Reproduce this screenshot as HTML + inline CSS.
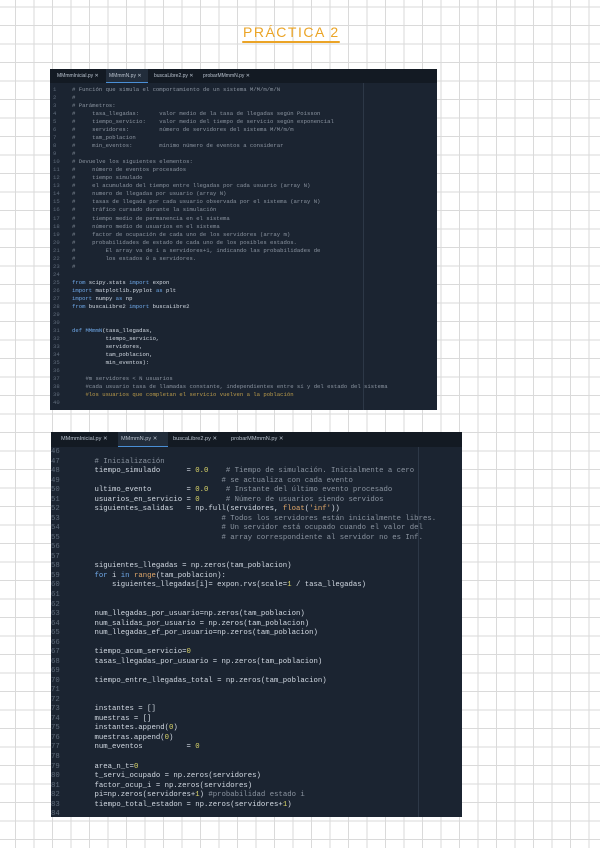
<!DOCTYPE html>
<html><head><meta charset="utf-8"><style>
*{margin:0;padding:0;box-sizing:border-box}
body{width:600px;height:848px;overflow:hidden;position:relative;background-color:#fff;
background-image:linear-gradient(to right,#dadada 1px,transparent 1px),linear-gradient(to bottom,#dadada 1px,transparent 1px);
background-size:18.5px 18.5px;background-position:15px 6.5px;font-family:"Liberation Mono",monospace}
.title{position:absolute;left:243px;top:24px;font-family:"Liberation Sans",sans-serif;font-size:14px;letter-spacing:1.5px;color:#eba426;font-weight:normal}
.uline{position:absolute;left:242px;top:41px;width:98px;height:2px;background:#eba426;border-radius:1px}
.panel{position:absolute;background:#1b2431;overflow:hidden}
.tabs{position:absolute;left:0;top:0;right:0;background:#131a23;font-family:"Liberation Sans",sans-serif;color:#b7c0cc}
.tab{position:absolute;top:0;white-space:nowrap}
.tab.act{background:#222d3b;border-bottom:1px solid #4a8fd6}
.ruler{position:absolute;top:0;bottom:0;width:1px;background:#2d3847}
pre{position:absolute;font-family:"Liberation Mono",monospace;color:#d3dae3;white-space:pre}
.ln{color:#5f6b7a}
.c{color:#8b94a0}
.k{color:#6fa8e8}
.n{color:#dcd66a}
.f{color:#e0a76a}
.y{color:#b99a4a}
</style></head><body>
<div class="title">PRÁCTICA 2</div><div class="uline"></div>

<div class="panel" style="left:50px;top:69px;width:387px;height:341px">
 <div class="tabs" style="height:14px;font-size:5px;line-height:14px">
  <div class="tab" style="left:4px;width:49px;padding-left:3px">MMmmInicial.py ✕</div>
  <div class="tab act" style="left:56px;width:42px;padding-left:3px;height:14px">MMmmN.py ✕</div>
  <div class="tab" style="left:101px;width:47px;padding-left:3px">buscaLibre2.py ✕</div>
  <div class="tab" style="left:150px;width:60px;padding-left:3px">probarMMmmN.py ✕</div>
 </div>
 <div class="ruler" style="left:313px;top:14px"></div>
 <pre class="ln" style="left:3px;top:17px;font-size:5.6px;line-height:8.03px">1
2
3
4
5
6
7
8
9
10
11
12
13
14
15
16
17
18
19
20
21
22
23
24
25
26
27
28
29
30
31
32
33
34
35
36
37
38
39
40</pre>
 <pre style="left:22px;top:17px;font-size:5.6px;line-height:8.03px"><span class="c"># Función que simula el comportamiento de un sistema M/M/m/m/N
#
# Parámetros:
#     tasa_llegadas:      valor medio de la tasa de llegadas según Poisson
#     tiempo_servicio:    valor medio del tiempo de servicio según exponencial
#     servidores:         número de servidores del sistema M/M/m/m
#     tam_poblacion
#     min_eventos:        mínimo número de eventos a considerar
#
# Devuelve los siguientes elementos:
#     número de eventos procesados
#     tiempo simulado
#     el acumulado del tiempo entre llegadas por cada usuario (array N)
#     numero de llegadas por usuario (array N)
#     tasas de llegada por cada usuario observada por el sistema (array N)
#     tráfico cursado durante la simulación
#     tiempo medio de permanencia en el sistema
#     número medio de usuarios en el sistema
#     factor de ocupación de cada uno de los servidores (array m)
#     probabilidades de estado de cada uno de los posibles estados.
#         El array va de 1 a servidores+1, indicando las probabilidades de
#         los estados 0 a servidores.
#</span>

<span class="k">from</span> scipy.stats <span class="k">import</span> expon
<span class="k">import</span> matplotlib.pyplot <span class="k">as</span> plt
<span class="k">import</span> numpy <span class="k">as</span> np
<span class="k">from</span> buscaLibre2 <span class="k">import</span> buscaLibre2


<span class="k">def</span> <span class="k">MMmmN</span>(tasa_llegadas,
          tiempo_servicio,
          servidores,
          tam_poblacion,
          min_eventos):

    <span class="c">#m servidores &lt; N usuarios</span>
    <span class="c">#cada usuario tasa de llamadas constante, independientes entre sí y del estado del sistema</span>
    <span class="y">#los usuarios que completan el servicio vuelven a la población</span>
</pre>
</div>

<div class="panel" style="left:51px;top:432px;width:411px;height:385px">
 <div class="tabs" style="height:15px;font-size:5.6px;line-height:15px">
  <div class="tab" style="left:7px;width:58px;padding-left:3px">MMmmInicial.py ✕</div>
  <div class="tab act" style="left:67px;width:50px;padding-left:3px;height:15px">MMmmN.py ✕</div>
  <div class="tab" style="left:119px;width:56px;padding-left:3px">buscaLibre2.py ✕</div>
  <div class="tab" style="left:177px;width:66px;padding-left:3px">probarMMmmN.py ✕</div>
 </div>
 <div class="ruler" style="left:367px;top:15px"></div>
 <pre class="ln" style="left:0px;top:16px;font-size:7.3px;line-height:9.53px">46
47
48
49
50
51
52
53
54
55
56
57
58
59
60
61
62
63
64
65
66
67
68
69
70
71
72
73
74
75
76
77
78
79
80
81
82
83
84</pre>
 <pre style="left:26px;top:16px;font-size:7.3px;line-height:9.53px">

    <span class="c"># Inicialización</span>
    tiempo_simulado      = <span class="n">0.0</span>    <span class="c"># Tiempo de simulación. Inicialmente a cero</span>
                                 <span class="c"># se actualiza con cada evento</span>
    ultimo_evento        = <span class="n">0.0</span>    <span class="c"># Instante del último evento procesado</span>
    usuarios_en_servicio = <span class="n">0</span>      <span class="c"># Número de usuarios siendo servidos</span>
    siguientes_salidas   = np.full(servidores, <span class="f">float</span>(<span class="f">'inf'</span>))
                                 <span class="c"># Todos los servidores están inicialmente libres.</span>
                                 <span class="c"># Un servidor está ocupado cuando el valor del</span>
                                 <span class="c"># array correspondiente al servidor no es Inf.</span>


    siguientes_llegadas = np.zeros(tam_poblacion)
    <span class="k">for</span> i <span class="k">in</span> <span class="f">range</span>(tam_poblacion):
        siguientes_llegadas[i]= expon.rvs(scale=<span class="n">1</span> / tasa_llegadas)


    num_llegadas_por_usuario=np.zeros(tam_poblacion)
    num_salidas_por_usuario = np.zeros(tam_poblacion)
    num_llegadas_ef_por_usuario=np.zeros(tam_poblacion)

    tiempo_acum_servicio=<span class="n">0</span>
    tasas_llegadas_por_usuario = np.zeros(tam_poblacion)

    tiempo_entre_llegadas_total = np.zeros(tam_poblacion)


    instantes = []
    muestras = []
    instantes.append(<span class="n">0</span>)
    muestras.append(<span class="n">0</span>)
    num_eventos          = <span class="n">0</span>

    area_n_t=<span class="n">0</span>
    t_servi_ocupado = np.zeros(servidores)
    factor_ocup_i = np.zeros(servidores)
    pi=np.zeros(servidores+<span class="n">1</span>) <span class="c">#probabilidad estado i</span>
    tiempo_total_estadon = np.zeros(servidores+<span class="n">1</span>)
</pre>
</div>
</body></html>
